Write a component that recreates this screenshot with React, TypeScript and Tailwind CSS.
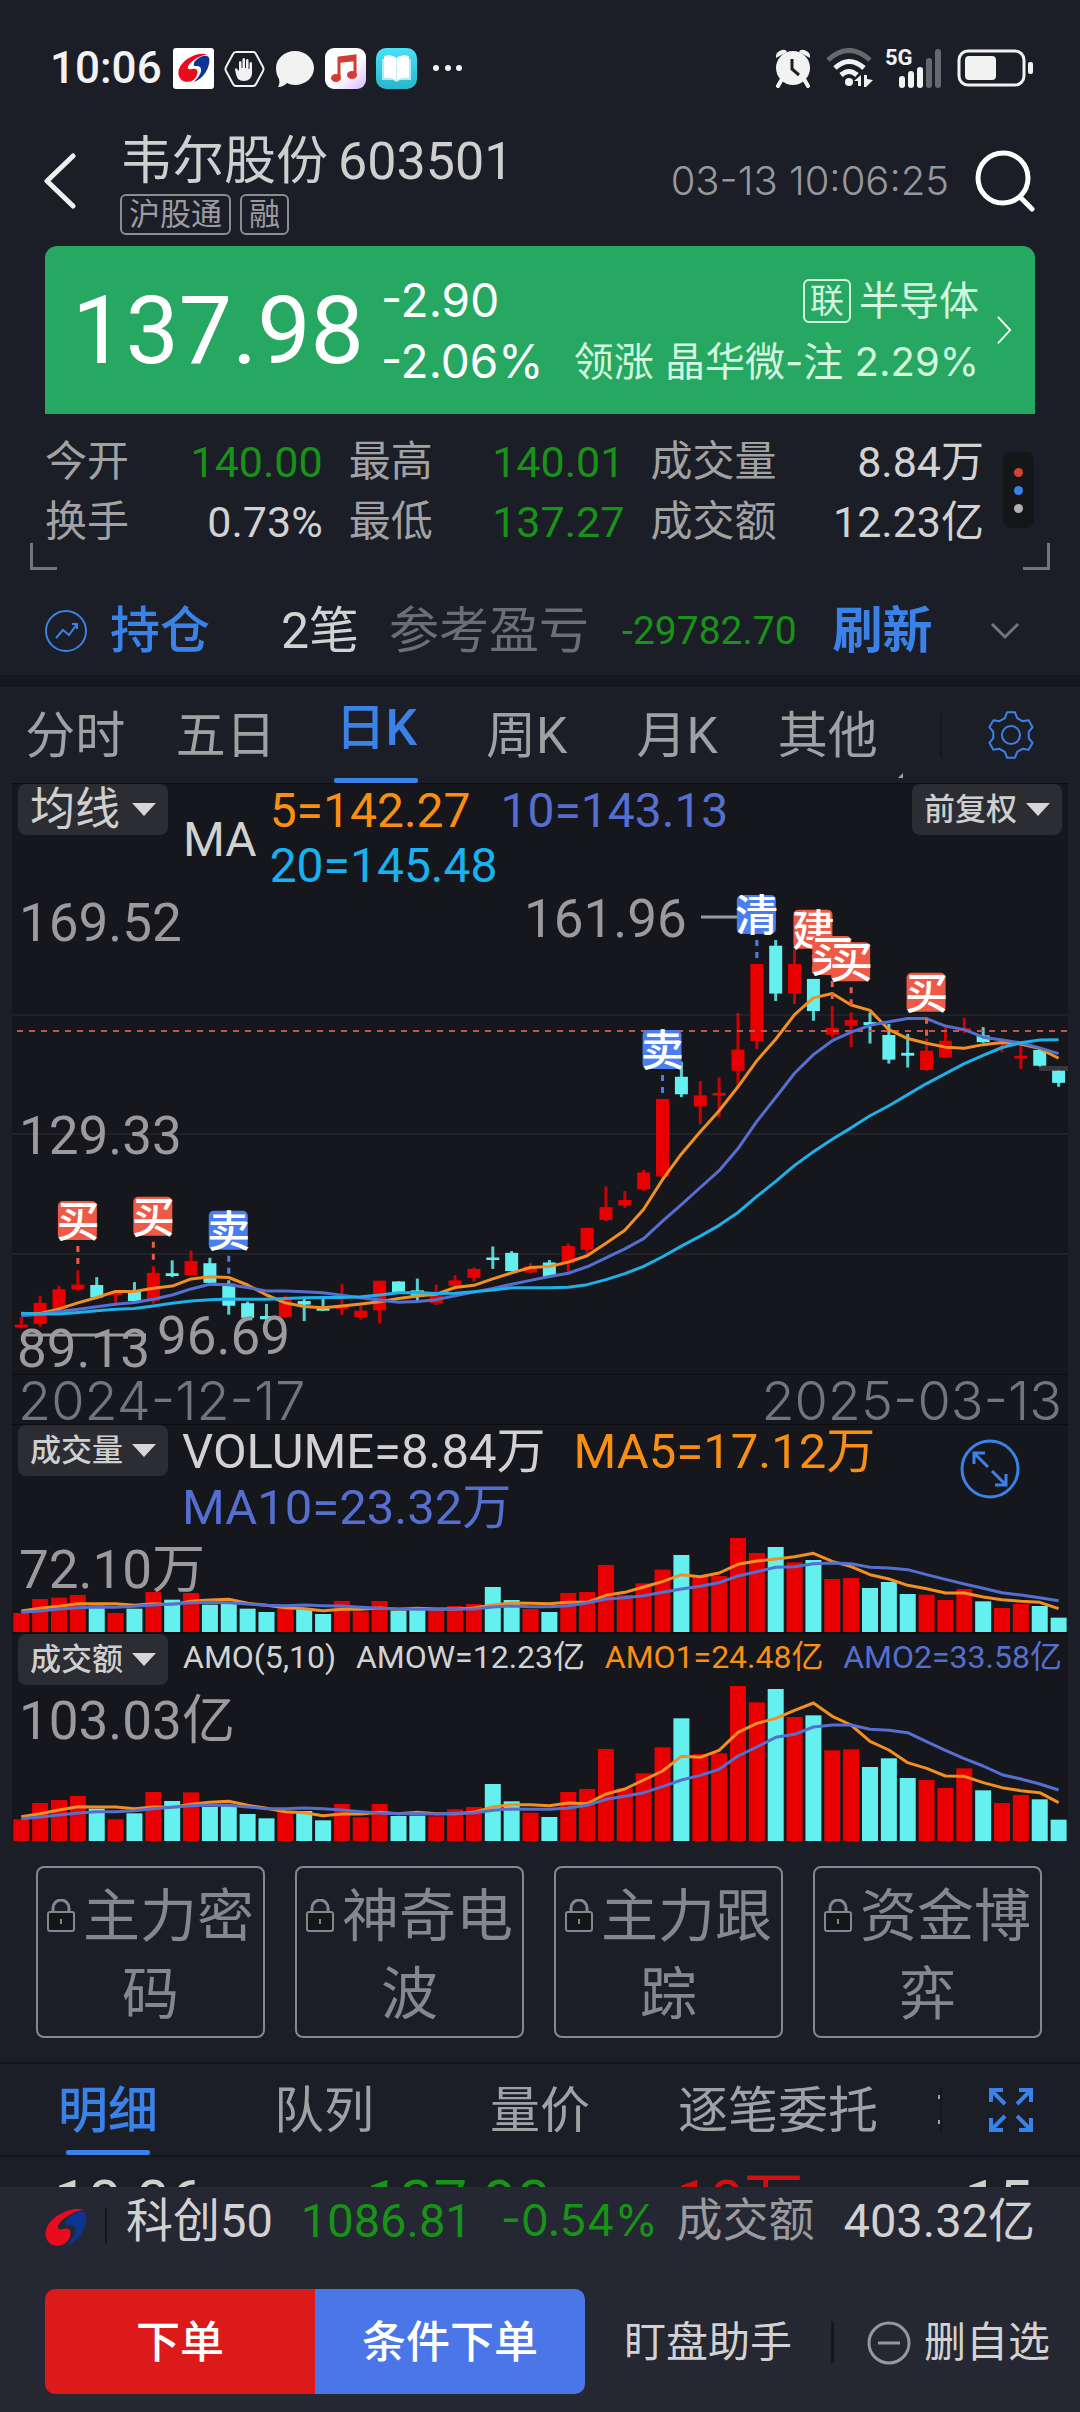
import React from "react";

const PITCH = 18.86;
const cx = (i: number) => 9.3 + PITCH * i;

const RED = "#e80000";
const CYAN = "#64f0ee";
const ORANGE = "#f28f22";
const VIOLET = "#556fd0";
const SKY = "#1fb0e8";

/* 1 = rising day, 0 = falling day */
const RISING = [
  1, 1, 1, 1, 0, 1, 0, 1, 0, 1, 0, 0, 0, 0, 1, 0, 0, 1, 1, 1, 0, 0, 1, 1, 1, 0, 0, 1, 0, 1, 1, 1, 1, 1, 1, 0, 1, 1, 1,
  1, 0, 1, 0, 1, 1, 0, 0, 0, 1, 1, 1, 0, 1, 1, 0, 0,
];

/* body top, body bottom, wick top, wick bottom */
const CANDLES = [
  [1301, 1309, 1280, 1312], [1240, 1299, 1220, 1307], [1202, 1257, 1193, 1260], [1189, 1202, 1149, 1206],
  [1190, 1225, 1168, 1228], [1211, 1219, 1207, 1245], [1205, 1235, 1182, 1238], [1156, 1234, 1137, 1242],
  [1157, 1165, 1121, 1168], [1123, 1162, 1094, 1162], [1129, 1184, 1114, 1186], [1186, 1248, 1177, 1273],
  [1241, 1282, 1236, 1284], [1277, 1286, 1243, 1290], [1232, 1280, 1220, 1282], [1235, 1245, 1228, 1291],
  [1255, 1262, 1228, 1262], [1249, 1257, 1188, 1274], [1262, 1280, 1247, 1287], [1178, 1261, 1178, 1298],
  [1180, 1210, 1180, 1215], [1205, 1222, 1172, 1235], [1212, 1241, 1189, 1246], [1177, 1193, 1163, 1202],
  [1145, 1170, 1141, 1180], [1113, 1120, 1082, 1145], [1100, 1151, 1095, 1152], [1138, 1155, 1129, 1158],
  [1127, 1166, 1120, 1167], [1081, 1128, 1074, 1153], [1030, 1091, 1030, 1105], [972, 1008, 914, 1011],
  [952, 968, 927, 974], [875, 922, 868, 927], [669, 886, 669, 890], [607, 656, 565, 664],
  [659, 690, 619, 739], [652, 660, 609, 720], [531, 590, 429, 633], [291, 507, 291, 529],
  [240, 374, 224, 395], [291, 374, 250, 403], [333, 423, 333, 450], [470, 489, 409, 497],
  [448, 464, 427, 524], [454, 462, 427, 514], [490, 559, 459, 570], [540, 548, 487, 581],
  [534, 588, 500, 590], [506, 553, 470, 553], [471, 479, 442, 485], [491, 510, 468, 512],
  [509, 517, 500, 538], [548, 556, 516, 585], [532, 576, 530, 578], [590, 624, 590, 635],
];

const MA5 = [1270, 1270, 1257, 1240, 1225, 1208, 1208, 1199, 1193, 1173, 1167, 1169, 1190, 1218, 1240, 1250, 1254, 1249, 1243, 1237, 1228, 1221, 1216, 1197, 1191, 1173, 1156, 1141, 1138, 1126, 1108, 1073, 1037, 978, 895, 823, 761, 702, 635, 562, 502, 433, 386, 374, 406, 421, 475, 500, 513, 524, 527, 517, 511, 515, 528, 555];
const MA10 = [1276, 1272, 1264, 1258, 1251, 1244, 1239, 1230, 1218, 1201, 1188, 1189, 1197, 1207, 1207, 1209, 1212, 1219, 1226, 1232, 1238, 1236, 1231, 1220, 1210, 1200, 1188, 1177, 1166, 1157, 1139, 1114, 1089, 1060, 1011, 965, 917, 870, 808, 732, 665, 597, 545, 506, 482, 463, 453, 444, 444, 465, 475, 496, 504, 512, 526, 542];
const MA20 = [1269, 1271, 1271, 1267, 1262, 1258, 1256, 1249, 1241, 1235, 1231, 1229, 1230, 1230, 1228, 1226, 1225, 1225, 1223, 1218, 1212, 1211, 1214, 1213, 1209, 1204, 1198, 1198, 1198, 1196, 1189, 1175, 1158, 1138, 1111, 1081, 1053, 1023, 987, 942, 900, 855, 817, 782, 750, 716, 688, 657, 626, 598, 570, 547, 525, 512, 504, 503];

const VOL = [759, 717, 713, 705, 737, 759, 746, 696, 719, 699, 734, 730, 746, 756, 742, 745, 762, 723, 754, 723, 752, 750, 751, 738, 732, 681, 720, 747, 756, 699, 696, 615, 705, 670, 629, 585, 648, 648, 534, 579, 561, 607, 600, 657, 654, 684, 666, 702, 704, 720, 687, 724, 744, 732, 738, 773];
const VOL5 = [753, 745, 739, 731, 731, 731, 736, 731, 734, 724, 720, 718, 730, 736, 743, 746, 752, 748, 748, 744, 748, 745, 747, 747, 744, 735, 729, 730, 731, 727, 727, 706, 697, 681, 665, 644, 650, 639, 613, 603, 597, 590, 580, 604, 620, 644, 657, 676, 686, 699, 699, 711, 719, 724, 727, 746];
const VOL10 = [757, 753, 747, 743, 741, 742, 739, 735, 732, 728, 727, 728, 732, 736, 737, 735, 737, 738, 742, 745, 747, 748, 748, 747, 747, 741, 738, 740, 740, 737, 729, 717, 713, 707, 697, 687, 679, 668, 648, 635, 622, 620, 611, 609, 611, 622, 624, 629, 644, 658, 672, 685, 698, 705, 713, 722];

const AMO = [568, 519, 510, 498, 536, 568, 550, 486, 513, 487, 531, 529, 552, 565, 545, 543, 571, 522, 562, 522, 558, 557, 559, 538, 531, 462, 514, 548, 561, 486, 477, 357, 475, 430, 352, 265, 372, 370, 168, 217, 177, 261, 256, 361, 358, 411, 385, 444, 450, 474, 415, 481, 519, 495, 508, 569];
const AMO5 = [560, 551, 540, 530, 531, 531, 536, 531, 532, 523, 517, 514, 526, 535, 545, 548, 557, 552, 552, 547, 551, 547, 551, 551, 547, 531, 524, 524, 527, 519, 521, 492, 477, 450, 423, 379, 382, 361, 307, 280, 265, 241, 219, 259, 285, 334, 360, 398, 415, 438, 439, 458, 473, 482, 488, 518];
const AMO10 = [566, 561, 555, 549, 545, 545, 542, 536, 532, 527, 525, 526, 531, 536, 536, 534, 536, 540, 545, 549, 551, 551, 552, 550, 549, 541, 537, 538, 538, 534, 526, 508, 499, 488, 470, 450, 436, 418, 378, 351, 322, 313, 291, 285, 285, 298, 301, 308, 335, 361, 386, 408, 434, 447, 462, 480];

const MARKERS = [
  { i: 3, top: 955, label: "买", buy: true },
  { i: 7, top: 943, label: "买", buy: true },
  { i: 11, top: 982, label: "卖", buy: false },
  { i: 34, top: 476, label: "卖", buy: false },
  { i: 39, top: 98, label: "清", buy: false },
  { i: 42, top: 139, label: "建", buy: true },
  { i: 43, top: 213, label: "买", buy: true },
  { i: 44, top: 230, label: "买", buy: true },
  { i: 48, top: 316, label: "买", buy: true },
];

const line = (vals: number[], y: (v: number) => number) => vals.map((v, i) => `${cx(i)},${y(v)}`).join(" ");

function KChart() {
  const y = (v: number) => v / 2.8 - 27;
  return (
    <svg viewBox="0 0 1056 487" className="block h-auto w-full" role="img" aria-label="日K线图">
      {[128, 247, 367].map((g) => (
        <line key={g} x1="0" x2="1056" y1={g} y2={g} stroke="#202227" strokeWidth="2" />
      ))}
      <rect x="1027" y="179" width="29" height="5" fill="#36383b" />
      {CANDLES.map(([t, b, h, l], i) => {
        const c = RISING[i] ? RED : CYAN;
        return (
          <g key={i}>
            <rect x={cx(i) - 1.5} y={y(h)} width="3" height={(l - h) / 2.8} fill={c} opacity="0.85" />
            <rect x={cx(i) - 6.5} y={y(t)} width="13" height={(b - t) / 2.8} fill={c} />
          </g>
        );
      })}
      <g fontSize="53" fill="#9b9b9d">
        <text x="7" y="54">169.52</text>
        <text x="7" y="267">129.33</text>
        <text x="5" y="480">89.13</text>
        <text x="145" y="467">96.69</text>
        <text x="512" y="50">161.96</text>
      </g>
      <path d="M10 448H134M689 30H726" stroke="#9b9b9d" strokeWidth="3" />
      <line x1="5" x2="1056" y1="144" y2="144" stroke="#c2564c" strokeWidth="2" strokeDasharray="6 6" />
      <g fill="none" strokeWidth="3" strokeLinejoin="round">
        <polyline points={line(MA5, y)} stroke={ORANGE} />
        <polyline points={line(MA10, y)} stroke={VIOLET} />
        <polyline points={line(MA20, y)} stroke={SKY} />
      </g>
      {MARKERS.map((m) => (
        <g key={m.i}>
          <line
            x1={cx(m.i)} x2={cx(m.i)} y1={y(m.top) + 45} y2={y(m.top) + 65}
            stroke={m.buy ? "#ee5a46" : "#4a7ef0"} strokeWidth="3" strokeDasharray="6 6"
          />
          <rect x={cx(m.i) - 20} y={y(m.top)} width="39" height="39" rx="5" fill={m.buy ? "#ee5a46" : "#4a7ef0"} />
          <text x={cx(m.i)} y={y(m.top) + 36} fontSize="43" fontWeight="500" textAnchor="middle" fill="#fff">
            {m.label}
          </text>
        </g>
      ))}
    </svg>
  );
}

function BarChart(props: { tops: number[]; fast: number[]; slow: number[]; height: number; shift: number; label: string; name: string }) {
  const y = (v: number) => v / 3 - props.shift;
  return (
    <svg viewBox={`0 0 1056 ${props.height}`} className="block h-auto w-full" role="img" aria-label={props.name}>
      <text x="7" y="54" fontSize="53" fill="#9b9b9d">{props.label}</text>
      {props.tops.map((t, i) => (
        <rect key={i} x={cx(i) - 8} y={y(t)} width="16" height={props.height - y(t)} fill={RISING[i] ? RED : CYAN} />
      ))}
      <g fill="none" strokeWidth="3" strokeLinejoin="round">
        <polyline points={line(props.fast, y)} stroke={ORANGE} />
        <polyline points={line(props.slow, y)} stroke={VIOLET} />
      </g>
    </svg>
  );
}

function BrandMark({ className }: { className: string }) {
  return (
    <svg viewBox="0 0 122 114" className={className} aria-hidden="true">
      <path d="M112 6C80-6 20 20 4 60c-10 30 11 52 34 50 24-2 36-20 36-38 0-14-12-14-26-10-12 2-14-8-4-20C60 24 88 8 112 6Z" fill="#ea0b1c" />
      <path d="M119 20C124 52 100 97 60 111c18-18 28-32 28-47 0-14-12-16-26-14-6-10 2-24 22-34 14-8 31-8 35 4Z" fill="#0d3491" />
    </svg>
  );
}

function StatusBar() {
  return (
    <div className="flex h-[136px] shrink-0 items-center justify-between pr-[46px] pl-[50px] text-[#f2f2f2]">
      <div className="flex items-center">
        <span className="w-[123px] text-[44px] leading-none font-medium">10:06</span>
        <div className="flex items-center gap-[10px]">
          <span className="flex h-[41px] w-[41px] items-center justify-center rounded-[3px] bg-white">
            <BrandMark className="w-[32px]" />
          </span>
          <svg viewBox="0 0 41 41" className="w-[41px]" aria-hidden="true">
            <path d="M12 4h17q2 0 3 2l7 13q1 2 0 4l-7 13q-1 2-3 2H12q-2 0-3-2L2 23q-1-2 0-4L9 6q1-2 3-2Z" fill="none" stroke="#f2f2f2" strokeWidth="2" />
            <path d="M14 31q-2-3-3-10 1-2 3 1l1 1V14q1-2 2.500 0v6h1V11q1.500-2 2.500 0v9h1V12q1.500-2 2.500 0v9h1V15q1.500-2 2.500 0v11q-1 7-8 7-4 0-6-2Z" fill="#f2f2f2" />
          </svg>
          <svg viewBox="0 0 40 41" className="w-[40px]" aria-hidden="true">
            <path d="M20 3c11 0 19 8 19 17s-8 17-19 17c-3 0-6-1-8-2-2 2-5 4-9 4 1-2 2-4 1-8-2-3-3-7-3-11C1 11 9 3 20 3Z" fill="#f2f2f2" />
          </svg>
          <svg viewBox="0 0 41 41" className="w-[41px]" aria-hidden="true">
            <defs>
              <linearGradient id="music" x1="0" y1="0" x2="1" y2="1">
                <stop offset="0.550" stopColor="#fff" />
                <stop offset="1" stopColor="#dcb8ff" />
              </linearGradient>
            </defs>
            <rect width="41" height="41" rx="9" fill="url(#music)" />
            <path d="M14 30V10l16-2v19" fill="none" stroke="#d23c32" strokeWidth="3" />
            <path d="M13 9l18-2v6l-18 2Z" fill="#d23c32" />
            <ellipse cx="11" cy="30" rx="5" ry="4" fill="#d23c32" />
            <ellipse cx="27" cy="27" rx="5" ry="4" fill="#d23c32" />
          </svg>
          <svg viewBox="0 0 41 41" className="w-[41px]" aria-hidden="true">
            <defs>
              <linearGradient id="book" x1="0" y1="0" x2="0" y2="1">
                <stop offset="0" stopColor="#46e2f8" />
                <stop offset="1" stopColor="#28b6cc" />
              </linearGradient>
            </defs>
            <rect width="41" height="41" rx="10" fill="url(#book)" />
            <path d="M6 11h29v21H24l-3.500 2-3.500-2H6Z" fill="#a6eef5" />
            <path d="M8 8q8-2 12.500 2Q25 6 33 8v22q-8-1-12.500 3Q16 29 8 30Z" fill="#fff" />
            <path d="M20.500 10v22" stroke="#c5eef3" strokeWidth="1" />
          </svg>
          <svg viewBox="0 0 34 41" className="ml-1 w-[34px]" aria-hidden="true">
            <circle cx="5" cy="20" r="3" fill="#f2f2f2" />
            <circle cx="17" cy="20" r="3" fill="#f2f2f2" />
            <circle cx="28" cy="20" r="3" fill="#f2f2f2" />
          </svg>
        </div>
      </div>
      <div className="flex items-center">
        <svg viewBox="0 0 38 40" className="mr-[14px] w-[38px]" aria-hidden="true">
          <path d="M2 10q-1-6 6-8 4-1 5 2Zm34 0q1-6-6-8-4-1-5 2Z" fill="#f2f2f2" />
          <path d="M8 31l-4 7M30 31l4 7" stroke="#f2f2f2" strokeWidth="4" strokeLinecap="round" />
          <circle cx="19" cy="20" r="17" fill="#f2f2f2" />
          <path d="M18 11v10l7 6" fill="none" stroke="#1b1e27" strokeWidth="3" />
        </svg>
        <svg viewBox="0 0 48 40" className="mr-[11px] w-[48px]" aria-hidden="true">
          <g fill="none" strokeWidth="5">
            <path d="M2 12q21-19 42 0" stroke="#66686c" />
            <path d="M9 20q14-13 29 0" stroke="#f2f2f2" />
            <path d="M15 27q8-7 16 0" stroke="#f2f2f2" />
          </g>
          <circle cx="23" cy="34" r="4" fill="#f2f2f2" />
          <path d="M35 27v11h-3v-5h-4Zm3 0h3v4l6 1-7 7h-2Z" fill="#f2f2f2" />
        </svg>
        <span className="relative mr-[14px] flex h-[40px] w-[58px] items-end gap-[3px] pl-[14px]">
          <span className="absolute top-0 left-0 text-[22px] leading-[20px] font-bold">5G</span>
          <span className="h-[12px] w-[6px] rounded-full bg-[#f2f2f2]" />
          <span className="h-[17px] w-[6px] rounded-full bg-[#f2f2f2]" />
          <span className="h-[21px] w-[6px] rounded-full bg-[#f2f2f2]" />
          <span className="h-[30px] w-[6px] rounded-full bg-[#66686c]" />
          <span className="h-[39px] w-[6px] rounded-full bg-[#66686c]" />
        </span>
        <svg viewBox="0 0 77 38" className="w-[77px]" aria-hidden="true">
          <rect x="2" y="2" width="65" height="34" rx="9" fill="none" stroke="#f2f2f2" strokeWidth="3" />
          <rect x="8" y="7" width="31" height="24" rx="4" fill="#f2f2f2" />
          <rect x="71" y="13" width="5" height="12" rx="2" fill="#f2f2f2" />
        </svg>
      </div>
    </div>
  );
}

function Header() {
  return (
    <header className="flex shrink-0 items-center pr-[44px] pb-[11px] pl-[43px]">
      <button type="button" aria-label="返回" className="mb-[9px] w-[36px]">
        <svg viewBox="0 0 36 56" className="w-[36px]">
          <path d="M30 3L4 28l26 25" fill="none" stroke="#f0f0f0" strokeWidth="5" strokeLinecap="round" strokeLinejoin="round" />
        </svg>
      </button>
      <div className="ml-[41px] flex-1">
        <h1 className="flex gap-[10px] text-[52px] leading-[52px] whitespace-nowrap text-[#cfcfcf]">
          <span>韦尔股份</span>
          <span>603501</span>
        </h1>
        <div className="mt-[6px] flex gap-[9px] text-[31px] leading-[37px] text-[#9b9ba0]">
          <span className="rounded-[6px] border-2 border-[#8b8c92] px-[7px]">沪股通</span>
          <span className="rounded-[6px] border-2 border-[#8b8c92] px-[7px]">融</span>
        </div>
      </div>
      <time className="mb-[9px] font-[Inter,sans-serif] text-[40px] leading-none font-light text-[#97989d]">03-13 10:06:25</time>
      <button type="button" aria-label="搜索" className="mb-[9px] ml-[25px]">
        <svg viewBox="0 0 62 62" className="w-[62px]">
          <circle cx="29" cy="28" r="25" fill="none" stroke="#fff" strokeWidth="5" />
          <path d="M46 47l12 12" stroke="#fff" strokeWidth="5" strokeLinecap="round" />
        </svg>
      </button>
    </header>
  );
}

function PriceCard() {
  return (
    <a href="#industry" className="mx-[45px] flex h-[168px] shrink-0 items-center rounded-t-[12px] bg-[#26a862] pr-[22px] pl-[27px] text-white">
      <span className="text-[95px] leading-none">137.98</span>
      <span className="ml-[17px] flex flex-col pt-[2px] font-[Inter,sans-serif] text-[46px] leading-[61px]">
        <span>-2.90</span>
        <span>-2.06%</span>
      </span>
      <span className="ml-auto flex flex-col items-end pt-[2px] font-[Inter,'Noto_Sans_CJK_SC',sans-serif] text-[40px] leading-[61px] whitespace-nowrap text-[#d3f7df]">
        <span className="flex items-center gap-[8px]">
          <span className="rounded-[6px] border-2 border-[#d3f7df] px-[5px] text-[34px] leading-[40px]">联</span>
          半导体
        </span>
        <span>领涨 晶华微-注 2.29%</span>
      </span>
      <svg viewBox="0 0 18 32" className="ml-[17px] w-[17px]" aria-hidden="true">
        <path d="M2 2l13 14L2 30" fill="none" stroke="#fff" strokeWidth="2" />
      </svg>
    </a>
  );
}

const STATS = [
  ["今开", "140.00", true], ["最高", "140.01", true], ["成交量", "8.84万", false],
  ["换手", "0.73%", false], ["最低", "137.27", true], ["成交额", "12.23亿", false],
] as const;

function Stats() {
  return (
    <section className="relative flex h-[156px] shrink-0 items-start pt-[18px] pr-[46px] pl-[45px]">
      <dl className="grid flex-1 grid-cols-[278fr_276fr_334fr] gap-x-[26px] text-[43px] leading-[60px]">
        {STATS.map(([k, v, green]) => (
          <div key={k} className="flex justify-between">
            <dt className="text-[42px] text-[#a2a2a5]">{k}</dt>
            <dd className={green ? "text-[#189218]" : "text-[#d2d2d2]"}>{v}</dd>
          </div>
        ))}
      </dl>
      <button type="button" aria-label="更多" className="mt-5 ml-[19px] flex h-[76px] w-[31px] flex-col items-center justify-center gap-[9px] rounded-[8px] bg-[#14161a]">
        <span className="h-[9px] w-[9px] rounded-full bg-[#cf4433]" />
        <span className="h-[9px] w-[9px] rounded-full bg-[#3b82e8]" />
        <span className="h-[9px] w-[9px] rounded-full bg-[#b2b0b6]" />
      </button>
      <span className="absolute bottom-0 left-[30px] h-[27px] w-[27px] border-b-3 border-l-3 border-[#74757a]" />
      <span className="absolute right-[30px] bottom-0 h-[27px] w-[27px] border-r-3 border-b-3 border-[#74757a]" />
    </section>
  );
}

function Position() {
  return (
    <section className="flex h-[105px] shrink-0 items-center pt-[17px] pr-[59px] pl-[44px] text-[50px] leading-[60px] whitespace-nowrap">
      <svg viewBox="0 0 44 44" className="w-[44px]" aria-hidden="true">
        <circle cx="22" cy="22" r="20" fill="none" stroke="#3b82e8" strokeWidth="2" />
        <path d="M12 29l7-8 6 5 8-11M28 15h5v5" fill="none" stroke="#3b82e8" strokeWidth="2" />
      </svg>
      <a href="#position" className="ml-[22px] font-medium text-[#3b82e8]">持仓</a>
      <span className="ml-[71px] text-[#d2d2d2]">2笔</span>
      <span className="ml-[30px] text-[#6d6e73]">参考盈亏</span>
      <span className="ml-[33px] text-[39px] text-[#189218]">-29782.70</span>
      <button type="button" className="ml-[36px] font-bold text-[#3b82e8]">刷新</button>
      <button type="button" aria-label="展开" className="ml-auto">
        <svg viewBox="0 0 32 20" className="w-[32px]">
          <path d="M3 3l13 13L29 3" fill="none" stroke="#74757a" strokeWidth="3" />
        </svg>
      </button>
    </section>
  );
}

function gearPath() {
  const pts: string[] = [];
  for (let k = 0; k < 6; k++) {
    const base = -90 + k * 60;
    for (const [da, r] of [[-20, 18], [-10, 23], [10, 23], [20, 18]]) {
      const a = ((base + da) * Math.PI) / 180;
      pts.push(`${26 + r * Math.cos(a)} ${25 + r * Math.sin(a)}`);
    }
  }
  return `M${pts.join("L")}Z`;
}

function PeriodTabs() {
  const tabs = ["分时", "五日", "日K", "周K", "月K", "其他"];
  return (
    <nav className="flex h-[96px] shrink-0 text-[50px]">
      <div className="grid flex-1 grid-cols-6">
        {tabs.map((t) =>
          t === "日K" ? (
            <button key={t} type="button" aria-current="true" className="relative pb-[14px] font-medium text-[#3b82e8]">
              {t}
              <span className="absolute bottom-0 left-1/2 h-[5px] w-[84px] -translate-x-1/2 rounded-[2px] bg-[#3b82e8]" />
            </button>
          ) : (
            <button key={t} type="button" className="relative pt-[2px] text-[#a0a1a4]">
              {t}
              {t === "其他" && (
                <span className="absolute right-0 bottom-[5px] border-b-5 border-l-5 border-b-[#a0a1a4] border-l-transparent" />
              )}
            </button>
          ),
        )}
      </div>
      <div className="flex w-[177px] items-center pl-[37px]">
        <span className="h-[44px] w-[2px] bg-[#15171c]" />
        <button type="button" aria-label="设置" className="ml-[43px]">
          <svg viewBox="0 0 52 50" className="w-[52px]">
            <path d={gearPath()} fill="none" stroke="#3b82e8" strokeWidth="2" strokeLinejoin="round" />
            <circle cx="26" cy="25" r="9" fill="none" stroke="#3b82e8" strokeWidth="2" />
          </svg>
        </button>
      </div>
    </nav>
  );
}

function Picker({ label, small }: { label: string; small?: boolean }) {
  return (
    <button type="button" className="flex h-[51px] w-[150px] shrink-0 items-center justify-between rounded-[8px] bg-[#2b2d32] px-[12px] text-[#cfcfcf]">
      <span className={small ? "text-[31px] leading-none font-medium" : "text-[45px] leading-none"}>{label}</span>
      <svg viewBox="0 0 24 13" className="w-[24px]" aria-hidden="true">
        <path d="M0 0h24L12 13Z" fill="#d6d6d6" />
      </svg>
    </button>
  );
}

function Charts() {
  return (
    <section className="mx-3 shrink-0 bg-[#15171c]">
      <div className="flex h-[104px] items-start border-t border-[#0c0d10] px-[6px] text-[48px] leading-[55px] whitespace-nowrap">
        <Picker label="均线" />
        <span className="mt-[28px] ml-[15px] text-[#d2d2d2]">MA</span>
        <div className="-mt-px ml-[13px] flex-1">
          <p className="flex gap-[30px]">
            <span className="text-[#f88f12]">5=142.27</span>
            <span className="text-[#556fd0]">10=143.13</span>
          </p>
          <p className="text-[#18b2f0]">20=145.48</p>
        </div>
        <Picker label="前复权" small />
      </div>
      <KChart />
      <div className="flex h-[51px] items-center justify-between border-y border-[#0c0d10] px-[6px] pt-[2px] font-[Inter,sans-serif] text-[54px] leading-none font-light text-[#74757a]">
        <time>2024-12-17</time>
        <time>2025-03-13</time>
      </div>
      <div className="flex h-[109px] items-start px-[6px] text-[49px] leading-[56px] whitespace-nowrap">
        <Picker label="成交量" small />
        <div className="-mt-px ml-[14px] flex-1">
          <p className="flex gap-[28px]">
            <span className="text-[#d2d2d2]">VOLUME=8.84万</span>
            <span className="text-[#f88f12]">MA5=17.12万</span>
          </p>
          <p className="text-[#556fd0]">MA10=23.32万</p>
        </div>
        <button type="button" aria-label="放大" className="mt-[14px] mr-[42px]">
          <svg viewBox="0 0 60 60" className="w-[60px]">
            <circle cx="30" cy="30" r="28" fill="none" stroke="#3b82e8" strokeWidth="3" />
            <path d="M14 25V14h11M14 14l14 14M46 35v11H35M46 46L32 32" fill="none" stroke="#3b82e8" strokeWidth="3" />
          </svg>
        </button>
      </div>
      <BarChart tops={VOL} fast={VOL5} slow={VOL10} height={98} shift={174} label="72.10万" name="成交量" />
      <div className="flex h-[53px] items-start border-t-2 border-[#0c0d10] px-[6px] text-[32px] leading-[47px] whitespace-nowrap">
        <Picker label="成交额" small />
        <p className="ml-[15px] flex flex-1 justify-between">
          <span className="text-[#d2d2d2]">AMO(5,10)</span>
          <span className="text-[#d2d2d2]">AMOW=12.23亿</span>
          <span className="text-[#f88f12]">AMO1=24.48亿</span>
          <span className="text-[#556fd0]">AMO2=33.58亿</span>
        </p>
      </div>
      <BarChart tops={AMO} fast={AMO5} slow={AMO10} height={156} shift={55} label="103.03亿" name="成交额" />
    </section>
  );
}

function Tools() {
  return (
    <section className="grid shrink-0 grid-cols-4 gap-[30px] border-b-2 border-[#14161b] pt-[25px] pr-[38px] pb-[24px] pl-[36px]">
      {["主力密码", "神奇电波", "主力跟踪", "资金博弈"].map((t) => (
        <button key={t} type="button" className="rounded-[8px] border-2 border-[#85868f] pt-[10px] pb-[2px] text-center text-[57px] leading-[78px] text-[#85868f]">
          <svg viewBox="0 0 28 34" className="mr-[8px] mb-[10px] inline-block w-[28px]" aria-hidden="true">
            <path d="M6 13V9a8 8 0 0 1 16 0v4" fill="none" stroke="#85868f" strokeWidth="3" />
            <rect x="1" y="13" width="26" height="19" rx="2" fill="#14161a" stroke="#85868f" strokeWidth="2" />
            <path d="M14 20v5" stroke="#85868f" strokeWidth="2" />
          </svg>
          {t}
        </button>
      ))}
    </section>
  );
}

function DetailTabs() {
  return (
    <nav className="flex h-[93px] shrink-0 items-center border-b-2 border-[#14161b] text-[50px] text-[#a0a1a4]">
      <div className="grid h-full flex-1 grid-cols-[216fr_216fr_216fr_260fr_32fr] overflow-hidden whitespace-nowrap">
        <button type="button" aria-current="true" className="relative pt-[4px] font-medium text-[#3b82e8]">
          明细
          <span className="absolute bottom-0 left-1/2 h-[5px] w-[84px] -translate-x-1/2 rounded-[2px] bg-[#3b82e8]" />
        </button>
        <button type="button" className="pt-[4px]">队列</button>
        <button type="button" className="pt-[4px]">量价</button>
        <button type="button" className="pt-[4px]">逐笔委托</button>
        <span className="flex flex-col items-end justify-center gap-[21px]" aria-hidden="true">
          <span className="h-[4px] w-[2px] bg-[#a0a1a4]" />
          <span className="h-[4px] w-[2px] bg-[#a0a1a4]" />
        </span>
      </div>
      <div className="flex w-[140px] items-center">
        <span className="h-[44px] w-[2px] bg-[#15171c]" />
        <button type="button" aria-label="全屏" className="ml-[47px]">
          <svg viewBox="0 0 44 44" className="w-[44px]">
            <path d="M2 14V2h12M2 2l14 14M42 14V2H30M42 2L28 16M2 30v12h12M2 42l14-14M42 30v12H30M42 42L28 28" fill="none" stroke="#3b82e8" strokeWidth="4" />
          </svg>
        </button>
      </div>
    </nav>
  );
}

function Ticks() {
  return (
    <table className="mt-[15px] w-full table-fixed text-[60px] leading-[60px]">
      <tbody>
        <tr>
          <td className="w-[366px] pl-[54px] text-[#cfcfcf]">10:06</td>
          <td className="w-[310px] text-[#189218]">137.98</td>
          <td className="w-[200px] text-[#d01010]">10万</td>
          <td className="pr-[48px] text-right text-[#cfcfcf]">15</td>
        </tr>
      </tbody>
    </table>
  );
}

function Footer() {
  return (
    <footer className="shrink-0 bg-[#252733] pb-[18px] whitespace-nowrap">
      <div className="flex h-[66px] items-center pr-[45px] pl-[45px] text-[47px] leading-none text-[#d2d2d2]">
        <BrandMark className="mt-4 w-[42px]" />
        <span className="mt-3 ml-[18px] h-[36px] w-[2px] bg-[#15171c]" />
        <span className="ml-[19px]">科创50</span>
        <span className="ml-[28px] text-[#189218]">1086.81</span>
        <span className="ml-[29px] font-[Inter,sans-serif] text-[44px] text-[#189218]">-0.54%</span>
        <span className="ml-auto text-[46px] text-[#9b9b9f]">成交额</span>
        <span className="ml-[29px]">403.32亿</span>
      </div>
      <div className="mt-[36px] flex items-center pr-[30px] pl-[45px]">
        <div className="flex h-[105px] w-[540px] overflow-hidden rounded-[10px] text-[44px] font-medium text-white">
          <button type="button" className="flex-1 bg-[#dc1a19] pt-[2px]">下单</button>
          <button type="button" className="flex-1 bg-[#4a76e8] pt-[2px]">条件下单</button>
        </div>
        <button type="button" className="ml-[39px] pt-[2px] text-[42px] text-[#d2d2d2]">盯盘助手</button>
        <span className="ml-auto h-[42px] w-[3px] bg-[#15171c]" />
        <button type="button" className="ml-[33px] flex items-center gap-[13px] pt-[2px] text-[42px] text-[#d2d2d2]">
          <svg viewBox="0 0 44 44" className="w-[44px]" aria-hidden="true">
            <circle cx="22" cy="22" r="20" fill="none" stroke="#97989d" strokeWidth="3" />
            <path d="M11 22h22" stroke="#97989d" strokeWidth="3" />
          </svg>
          删自选
        </button>
      </div>
    </footer>
  );
}

export default function App() {
  return (
    <div className="flex h-screen flex-col overflow-hidden bg-[#1b1e27] font-[Roboto,'Noto_Sans_CJK_SC',sans-serif]">
      <StatusBar />
      <Header />
      <main className="flex min-h-0 flex-1 flex-col overflow-hidden">
        <PriceCard />
        <Stats />
        <Position />
        <div className="h-3 shrink-0 bg-[#15171c]" />
        <PeriodTabs />
        <Charts />
        <Tools />
        <DetailTabs />
        <Ticks />
      </main>
      <Footer />
    </div>
  );
}
